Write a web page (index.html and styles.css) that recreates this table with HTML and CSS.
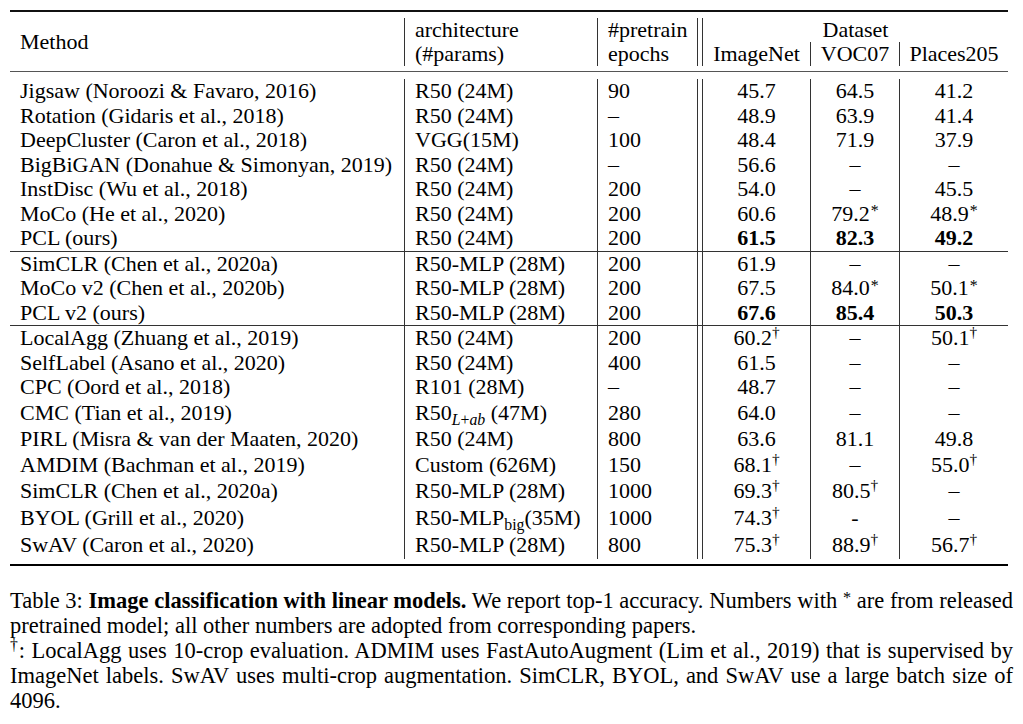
FILE: index.html
```html
<!DOCTYPE html>
<html lang="en">
<head>
<meta charset="utf-8">
<title>Table 3: Image classification with linear models</title>
<link rel="stylesheet" href="styles.css">
</head>
<body>
<div class="page">
  <div class="table">
    <div class="rule-top"></div>
    <div class="head">
      <div class="h-method">Method</div>
      <div class="h-arch">architecture<br>(#params)</div>
      <div class="h-ep">#pretrain<br>epochs</div>
      <div class="h-data">Dataset</div>
      <div class="h-in">ImageNet</div>
      <div class="h-voc">VOC07</div>
      <div class="h-pl">Places205</div>
    </div>
    <div class="rule-head"></div>

    <div class="group g1">
      <div class="row"><div class="m">Jigsaw (Noroozi &amp; Favaro, 2016)</div><div class="a">R50 (24M)</div><div class="e">90</div><div class="n1">45.7</div><div class="n">64.5</div><div class="n">41.2</div></div>
      <div class="row"><div class="m">Rotation (Gidaris et al., 2018)</div><div class="a">R50 (24M)</div><div class="e">–</div><div class="n1">48.9</div><div class="n">63.9</div><div class="n">41.4</div></div>
      <div class="row"><div class="m">DeepCluster (Caron et al., 2018)</div><div class="a">VGG(15M)</div><div class="e">100</div><div class="n1">48.4</div><div class="n">71.9</div><div class="n">37.9</div></div>
      <div class="row"><div class="m">BigBiGAN (Donahue &amp; Simonyan, 2019)</div><div class="a">R50 (24M)</div><div class="e">–</div><div class="n1">56.6</div><div class="n">–</div><div class="n">–</div></div>
      <div class="row"><div class="m">InstDisc (Wu et al., 2018)</div><div class="a">R50 (24M)</div><div class="e">200</div><div class="n1">54.0</div><div class="n">–</div><div class="n">45.5</div></div>
      <div class="row"><div class="m">MoCo (He et al., 2020)</div><div class="a">R50 (24M)</div><div class="e">200</div><div class="n1">60.6</div><div class="n">79.2<sup class="ast">*</sup></div><div class="n">48.9<sup class="ast">*</sup></div></div>
      <div class="row"><div class="m">PCL (ours)</div><div class="a">R50 (24M)</div><div class="e">200</div><div class="n1 b">61.5</div><div class="n b">82.3</div><div class="n b">49.2</div></div>
    </div>
    <div class="rule-mid"></div>

    <div class="group">
      <div class="row"><div class="m">SimCLR (Chen et al., 2020a)</div><div class="a">R50-MLP (28M)</div><div class="e">200</div><div class="n1">61.9</div><div class="n">–</div><div class="n">–</div></div>
      <div class="row"><div class="m">MoCo v2 (Chen et al., 2020b)</div><div class="a">R50-MLP (28M)</div><div class="e">200</div><div class="n1">67.5</div><div class="n">84.0<sup class="ast">*</sup></div><div class="n">50.1<sup class="ast">*</sup></div></div>
      <div class="row"><div class="m">PCL v2 (ours)</div><div class="a">R50-MLP (28M)</div><div class="e">200</div><div class="n1 b">67.6</div><div class="n b">85.4</div><div class="n b">50.3</div></div>
    </div>
    <div class="rule-mid"></div>

    <div class="group g3">
      <div class="row"><div class="m">LocalAgg (Zhuang et al., 2019)</div><div class="a">R50 (24M)</div><div class="e">200</div><div class="n1">60.2<sup class="dag">†</sup></div><div class="n">–</div><div class="n">50.1<sup class="dag">†</sup></div></div>
      <div class="row"><div class="m">SelfLabel (Asano et al., 2020)</div><div class="a">R50 (24M)</div><div class="e">400</div><div class="n1">61.5</div><div class="n">–</div><div class="n">–</div></div>
      <div class="row"><div class="m">CPC (Oord et al., 2018)</div><div class="a">R101 (28M)</div><div class="e">–</div><div class="n1">48.7</div><div class="n">–</div><div class="n">–</div></div>
      <div class="row r25"><div class="m">CMC (Tian et al., 2019)</div><div class="a">R50<sub class="math"><i>L</i>+<i>ab</i></sub> (47M)</div><div class="e">280</div><div class="n1">64.0</div><div class="n">–</div><div class="n">–</div></div>
      <div class="row r26"><div class="m">PIRL (Misra &amp; van der Maaten, 2020)</div><div class="a">R50 (24M)</div><div class="e">800</div><div class="n1">63.6</div><div class="n">81.1</div><div class="n">49.8</div></div>
      <div class="row r265"><div class="m">AMDIM (Bachman et al., 2019)</div><div class="a">Custom (626M)</div><div class="e">150</div><div class="n1">68.1<sup class="dag">†</sup></div><div class="n">–</div><div class="n">55.0<sup class="dag">†</sup></div></div>
      <div class="row r27"><div class="m">SimCLR (Chen et al., 2020a)</div><div class="a">R50-MLP (28M)</div><div class="e">1000</div><div class="n1">69.3<sup class="dag">†</sup></div><div class="n">80.5<sup class="dag">†</sup></div><div class="n">–</div></div>
      <div class="row r27"><div class="m">BYOL (Grill et al., 2020)</div><div class="a">R50-MLP<sub class="big">big</sub>(35M)</div><div class="e">1000</div><div class="n1">74.3<sup class="dag">†</sup></div><div class="n">-</div><div class="n">–</div></div>
      <div class="row r27"><div class="m">SwAV (Caron et al., 2020)</div><div class="a">R50-MLP (28M)</div><div class="e">800</div><div class="n1">75.3<sup class="dag">†</sup></div><div class="n">88.9<sup class="dag">†</sup></div><div class="n">56.7<sup class="dag">†</sup></div></div>
    </div>
    <div class="rule-bottom"></div>
  </div>

  <div class="caption">
    <span class="ln">Table 3: <b>Image classification with linear models.</b> We report top-1 accuracy. Numbers with <sup class="cast">*</sup> are from released</span>
    <span class="ln last">pretrained model; all other numbers are adopted from corresponding papers.</span>
    <span class="ln"><sup class="cdag">†</sup>: LocalAgg uses 10-crop evaluation. ADMIM uses FastAutoAugment (Lim et al., 2019) that is supervised by</span>
    <span class="ln">ImageNet labels. SwAV uses multi-crop augmentation. SimCLR, BYOL, and SwAV use a large batch size of</span>
    <span class="ln last">4096.</span>
  </div>
</div>
</body>
</html>
```

FILE: styles.css
```css
body {
  margin: 0;
  background: #ffffff;
  color: #000000;
  font-family: "Liberation Serif", "Times New Roman", Times, serif;
}

.page {
  padding: 10px 0 0 10px;
}

.table {
  width: 998px;
  font-size: 22px;
}

.rule-top {
  height: 2px;
  background: #111111;
}

.rule-head {
  height: 1px;
  background: #555555;
}

.rule-mid {
  height: 1px;
  background: #333333;
}

.rule-bottom {
  height: 2px;
  background: #000000;
}

/* header */
.head {
  display: grid;
  grid-template-columns: 394px 193px 101px 112px 89px 109px;
  grid-template-rows: 24px 24px;
  padding: 6px 0 5px;
  line-height: 24px;
}

.h-method {
  grid-column: 1;
  grid-row: 1 / 3;
  padding-left: 10px;
  display: flex;
  align-items: center;
}

.h-arch {
  grid-column: 2;
  grid-row: 1 / 3;
  border-left: 1px solid #333333;
  padding-left: 10px;
}

.h-ep {
  grid-column: 3;
  grid-row: 1 / 3;
  border-left: 1px solid #333333;
  border-right: 1px solid #333333;
  padding-left: 10px;
}

.h-data {
  grid-column: 4 / 7;
  grid-row: 1;
  margin-left: 4px;
  border-left: 1px solid #333333;
  text-align: center;
}

.h-in {
  grid-column: 4;
  grid-row: 2;
  margin-left: 4px;
  border-left: 1px solid #333333;
  text-align: center;
}

.h-voc {
  grid-column: 5;
  grid-row: 2;
  border-left: 1px solid #333333;
  text-align: center;
}

.h-pl {
  grid-column: 6;
  grid-row: 2;
  border-left: 1px solid #333333;
  text-align: center;
}

/* body */
.g1 {
  padding-top: 7px;
}

.g3 {
  padding-bottom: 6px;
}

.row {
  display: grid;
  grid-template-columns: 394px 193px 101px 112px 89px 109px;
  height: 24.5px;
  line-height: 24.5px;
}

.row.r25 { height: 25px; line-height: 25px; }
.row.r26 { height: 26px; line-height: 27px; }
.row.r265 { height: 26.5px; line-height: 27.5px; }
.row.r27 { height: 27px; line-height: 28px; }

.m {
  padding-left: 10px;
  white-space: nowrap;
}

.a {
  border-left: 1px solid #333333;
  padding-left: 10px;
  white-space: nowrap;
}

.e {
  border-left: 1px solid #333333;
  border-right: 1px solid #333333;
  padding-left: 10px;
}

.n1 {
  margin-left: 4px;
  border-left: 1px solid #333333;
  text-align: center;
  white-space: nowrap;
}

.n {
  border-left: 1px solid #333333;
  text-align: center;
  white-space: nowrap;
}

.b {
  font-weight: bold;
}

sup, sub {
  line-height: 0;
}

.ast {
  font-size: 0.72em;
  vertical-align: 0.28em;
  margin-left: 1px;
}

.dag {
  font-size: 0.7em;
  vertical-align: 0.5em;
}

.math {
  font-size: 0.72em;
  vertical-align: -0.3em;
}

.big {
  font-size: 0.72em;
  vertical-align: -0.3em;
}

/* caption */
.caption {
  width: 1003px;
  margin-top: 22px;
  font-size: 22.5px;
  line-height: 25px;
}

.ln {
  display: block;
  text-align: justify;
  text-align-last: justify;
  white-space: nowrap;
}

.ln.last {
  text-align-last: left;
}

.cast {
  font-size: 0.72em;
  vertical-align: 0.3em;
}

.cdag {
  font-size: 0.7em;
  vertical-align: 0.5em;
}
```
